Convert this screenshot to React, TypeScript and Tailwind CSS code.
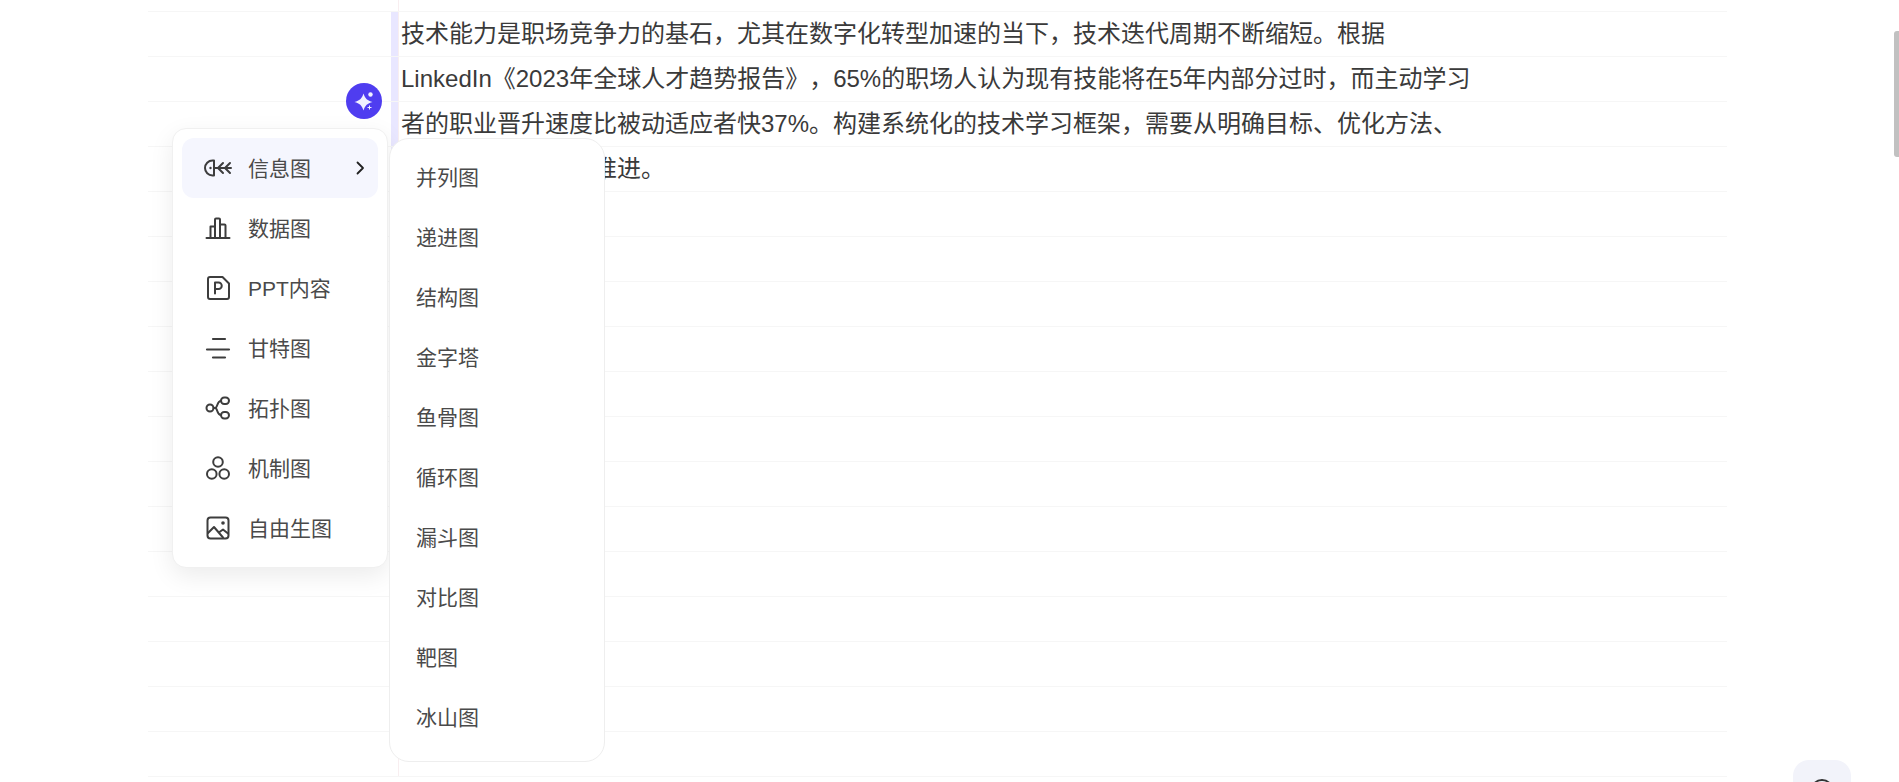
import React from "react";

const FONT = "font-['Liberation_Sans','Noto_Sans_CJK_SC',sans-serif]";

const lines = [
  "技术能力是职场竞争力的基石，尤其在数字化转型加速的当下，技术迭代周期不断缩短。根据",
  "LinkedIn《2023年全球人才趋势报告》，65%的职场人认为现有技能将在5年内部分过时，而主动学习",
  "者的职业晋升速度比被动适应者快37%。构建系统化的技术学习框架，需要从明确目标、优化方法、",
  "强化实践三个维度推进。",
];

const rows = Array.from({ length: 17 }, (_, i) => lines[i] ?? "");

const S = { fill: "none", stroke: "#3d3d3d", strokeWidth: 2, strokeLinecap: "round", strokeLinejoin: "round" } as const;

const Fish = () => (
  <svg width="28" height="24" viewBox="0 0 28 24" {...S}>
    <path d="M10 4.500H8.500a7.500 7.500 0 0 0 0 15H10z" />
    <circle cx="6.500" cy="12" r="1.200" fill="#3d3d3d" stroke="none" />
    <path d="M10 12h17M19 7l-5 5 5 5M26 7l-5 5 5 5" />
  </svg>
);
const Bars = () => (
  <svg width="28" height="24" viewBox="0 0 28 24" {...S}>
    <path d="M2.500 22h23" />
    <path d="M6.500 22V10.500h4.500V22M11 22V3.500a1 1 0 0 1 1-1h3a1 1 0 0 1 1 1V22M16 22V8.500h4.500a1 1 0 0 1 1 1V22" />
  </svg>
);
const Ppt = () => (
  <svg width="28" height="24" viewBox="0 0 28 24" {...S}>
    <path d="M4 3a2 2 0 0 1 2-2h12.500L25 7.500V21a2 2 0 0 1-2 2H6a2 2 0 0 1-2-2z" />
    <path d="M11 17.500V6.500h3.500a3 3 0 0 1 0 6.500H11" />
  </svg>
);
const Gantt = () => (
  <svg width="28" height="24" viewBox="0 0 28 24" {...S} strokeWidth={2.200}>
    <path d="M9 3h12M3 13.500h22M9 21.500h12" />
  </svg>
);
const Topo = () => (
  <svg width="28" height="24" viewBox="0 0 28 24" {...S}>
    <circle cx="6" cy="12" r="3.500" />
    <rect x="17" y="1.500" width="8" height="6.500" rx="3.200" />
    <rect x="17" y="16" width="8" height="6.500" rx="3.200" />
    <path d="M9.500 12h1.500c3 0 1.500-7 6-7M11 12c3 0 1.500 7 6 7" />
  </svg>
);
const Circles = () => (
  <svg width="28" height="24" viewBox="0 0 28 24" {...S}>
    <circle cx="14" cy="6" r="4.800" />
    <circle cx="7.800" cy="18" r="4.800" />
    <circle cx="20.200" cy="18" r="4.800" />
  </svg>
);
const Picture = () => (
  <svg width="28" height="24" viewBox="0 0 28 24" {...S}>
    <rect x="3.500" y="1.500" width="21" height="21" rx="3" />
    <path d="m4 17 6-6 9 10.500M15.500 16l3.500-2.500 5 4" />
    <circle cx="19" cy="7" r="1.800" fill="#3d3d3d" stroke="none" />
  </svg>
);

const mainItems: [React.ReactNode, string][] = [
  [<Fish />, "信息图"],
  [<Bars />, "数据图"],
  [<Ppt />, "PPT内容"],
  [<Gantt />, "甘特图"],
  [<Topo />, "拓扑图"],
  [<Circles />, "机制图"],
  [<Picture />, "自由生图"],
];

const subItems = ["并列图", "递进图", "结构图", "金字塔", "鱼骨图", "循环图", "漏斗图", "对比图", "靶图", "冰山图"];

export default function App() {
  return (
    <div className={`relative h-[782px] w-[1899px] overflow-hidden bg-white ${FONT}`}>
      <div className="ml-[148px] w-[1579px]">
        <div className="flex h-[12px] border-b border-[#f6f6f6]">
          <div className="w-[250px]" />
          <div className="border-l border-[#f8eef0]" />
        </div>
        {rows.map((text, i) => (
          <div key={i} className="flex h-[45px] border-b border-[#f6f6f6]">
            <div className="w-[243px]" />
            <div className={`w-[7px] ${i < 4 ? "bg-[#e9e7ff]" : ""}`} />
            <div className="flex-1 whitespace-nowrap border-l border-[#f8eef0] pl-[2px] text-[24px] leading-[44px] text-[#3a3a3a] [text-spacing-trim:space-all] [font-feature-settings:'chws'_0,'palt'_0]">
              {text}
            </div>
          </div>
        ))}
      </div>

      <div className="absolute left-[346px] top-[83px] flex h-[36px] w-[36px] items-center justify-center rounded-full bg-[#4f3df0]">
        <svg width="24" height="24" viewBox="0 0 24 24" fill="#f0f1ff">
          <path d="M11.500 4.500C13 9.500 15.500 11.800 20.500 13 15.500 14.200 13 16.500 11.500 21.500 10 16.500 7.500 14.200 2.500 13 7.500 11.800 10 9.500 11.500 4.500z" />
          <circle cx="18.500" cy="5.500" r="2.200" />
          <path d="M17 16.500h1v1.500h1.500v1h-1.500v1.500h-1V19h-1.500v-1h1.500z" fill="#4f3df0" stroke="#4f3df0" strokeWidth="1.500" />
          <path d="M17 16.500h1v1.500h1.500v1h-1.500v1.500h-1V19h-1.500v-1h1.500z" />
        </svg>
      </div>

      <div className="absolute left-[172px] top-[128px] w-[216px] rounded-[14px] border border-[#f0f0f0] bg-white p-[9px] shadow-[0_8px_24px_rgba(0,0,0,0.08)]">
        {mainItems.map(([icon, label], i) => (
          <div
            key={label}
            className={`flex h-[60px] items-center rounded-[12px] pl-[22px] pr-[10px] pt-[2px] text-[21px] text-[#4a4a4a] ${i === 0 ? "bg-[#f5f6fe]" : ""}`}
          >
            <span className="-mt-[2px] flex w-[28px] justify-center">{icon}</span>
            <span className="ml-[16px] flex-1">{label}</span>
            {i === 0 && (
              <svg width="16" height="16" viewBox="0 0 16 16" fill="none" stroke="#222" strokeWidth="1.800" strokeLinecap="round" strokeLinejoin="round" className="-mt-[2px]">
                <path d="m5.500 2.500 5.500 5.500-5.500 5.500" />
              </svg>
            )}
          </div>
        ))}
      </div>

      <div className="absolute left-[389px] top-[138px] w-[216px] rounded-[20px] border border-[#eeeeee] bg-white pb-[13px] pt-[9px]">
        {subItems.map((label) => (
          <div key={label} className="flex h-[60px] items-center pl-[26px] text-[21px] text-[#4a4a4a]">
            {label}
          </div>
        ))}
      </div>

      <div className="absolute left-[1793px] top-[760px] flex h-[58px] w-[58px] justify-center rounded-[16px] bg-[#f2f3fa] pt-[18px]">
        <svg width="26" height="26" viewBox="0 0 26 26" fill="none" stroke="#333" strokeWidth="1.800">
          <circle cx="13" cy="13" r="11" />
        </svg>
      </div>

      <div className="absolute left-[1894px] top-[31px] h-[126px] w-[5px] rounded-l-[3px] bg-[#c1c1c1]" />
    </div>
  );
}
